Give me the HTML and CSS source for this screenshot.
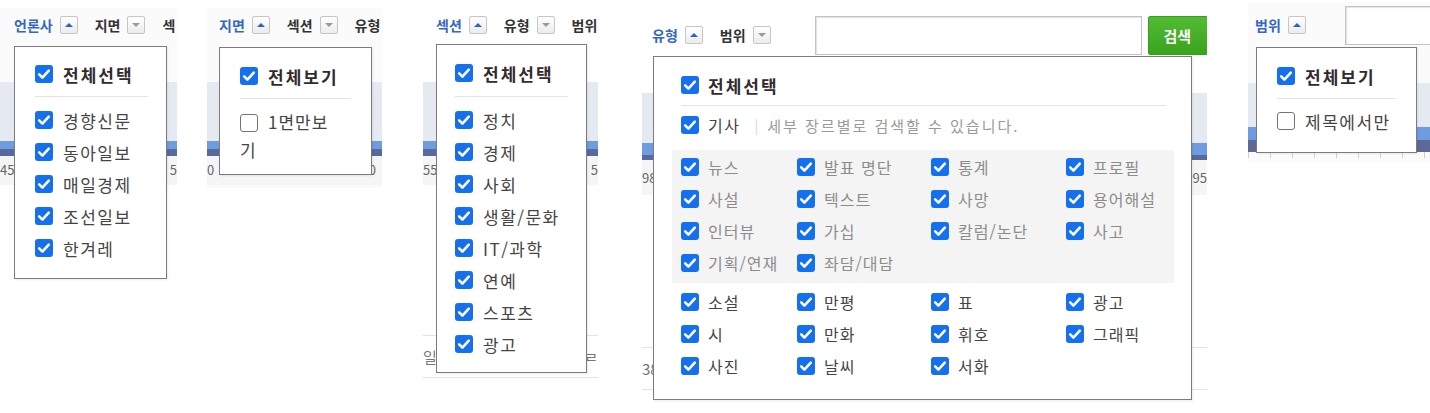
FILE: index.html
```html
<!DOCTYPE html>
<html lang="ko">
<head>
    <meta charset="UTF-8">
    <meta name="viewport" content="width=device-width, initial-scale=1.0">
    <title>검색 필터</title>
    <link rel="stylesheet" href="styles.css">
</head>
<body>
<div class="strip">

    <!-- 언론사 -->
    <section class="shot shot-press">
        <div class="tabs">
            <span class="tab on">언론사</span><span class="toggle up"></span>
            <span class="tab">지면</span><span class="toggle"></span>
            <span class="tab">섹</span>
        </div>
        <div class="chart">
            <div class="band"></div>
            <div class="bar"></div>
            <div class="base"></div>
            <div class="axis"><span>45</span><span>5</span></div>
        </div>
        <div class="menu menu-press">
            <label class="opt head"><span class="cb on"></span>전체선택</label>
            <hr>
            <label class="opt"><span class="cb on"></span>경향신문</label>
            <label class="opt"><span class="cb on"></span>동아일보</label>
            <label class="opt"><span class="cb on"></span>매일경제</label>
            <label class="opt"><span class="cb on"></span>조선일보</label>
            <label class="opt"><span class="cb on"></span>한겨레</label>
        </div>
    </section>

    <!-- 지면 -->
    <section class="shot shot-page">
        <div class="tabs">
            <span class="tab on">지면</span><span class="toggle up"></span>
            <span class="tab">섹션</span><span class="toggle"></span>
            <span class="tab">유형</span>
        </div>
        <div class="chart">
            <div class="band"></div>
            <div class="bar"></div>
            <div class="base"></div>
            <div class="axis"><span>0</span><span>1000</span><span>1000</span></div>
        </div>
        <div class="menu menu-page">
            <label class="opt head"><span class="cb on"></span>전체보기</label>
            <hr>
            <label class="opt wrap"><span class="cb off"></span>1면만보<br>기</label>
        </div>
    </section>

    <!-- 섹션 -->
    <section class="shot shot-section">
        <div class="tabs">
            <span class="tab on">섹션</span><span class="toggle up"></span>
            <span class="tab">유형</span><span class="toggle"></span>
            <span class="tab">범위</span>
        </div>
        <div class="chart">
            <div class="band"></div>
            <div class="bar"></div>
            <div class="base"></div>
            <div class="axis"><span>55</span><span>5</span></div>
        </div>
        <div class="list-rows">
            <div class="list-row"><span>일</span><span>여ㄹ</span></div>
        </div>
        <div class="menu menu-section">
            <label class="opt head"><span class="cb on"></span>전체선택</label>
            <hr>
            <label class="opt"><span class="cb on"></span>정치</label>
            <label class="opt"><span class="cb on"></span>경제</label>
            <label class="opt"><span class="cb on"></span>사회</label>
            <label class="opt"><span class="cb on"></span>생활/문화</label>
            <label class="opt"><span class="cb on"></span>IT/과학</label>
            <label class="opt"><span class="cb on"></span>연예</label>
            <label class="opt"><span class="cb on"></span>스포츠</label>
            <label class="opt"><span class="cb on"></span>광고</label>
        </div>
    </section>

    <!-- 유형 -->
    <section class="shot shot-type">
        <div class="tabs tabs-tall">
            <span class="tab on">유형</span><span class="toggle up"></span>
            <span class="tab">범위</span><span class="toggle"></span>
            <input class="query" type="text">
            <button class="search">검색</button>
        </div>
        <div class="chart">
            <div class="band"></div>
            <div class="bar"></div>
            <div class="base"></div>
            <div class="axis"><span>98</span><span>995</span></div>
        </div>
        <div class="list-rows">
            <div class="list-row"><span>38</span><span></span></div>
        </div>
        <div class="menu menu-type">
            <label class="opt head"><span class="cb on"></span>전체선택</label>
            <hr>
            <div class="article">
                <label class="opt"><span class="cb on"></span>기사</label>
                <span class="pipe">|</span>
                <span class="hint">세부 장르별로 검색할 수 있습니다.</span>
            </div>
            <div class="genres sub">
                <label class="opt"><span class="cb on"></span>뉴스</label>
                <label class="opt"><span class="cb on"></span>발표 명단</label>
                <label class="opt"><span class="cb on"></span>통계</label>
                <label class="opt"><span class="cb on"></span>프로필</label>
                <label class="opt"><span class="cb on"></span>사설</label>
                <label class="opt"><span class="cb on"></span>텍스트</label>
                <label class="opt"><span class="cb on"></span>사망</label>
                <label class="opt"><span class="cb on"></span>용어해설</label>
                <label class="opt"><span class="cb on"></span>인터뷰</label>
                <label class="opt"><span class="cb on"></span>가십</label>
                <label class="opt"><span class="cb on"></span>칼럼/논단</label>
                <label class="opt"><span class="cb on"></span>사고</label>
                <label class="opt"><span class="cb on"></span>기획/연재</label>
                <label class="opt"><span class="cb on"></span>좌담/대담</label>
            </div>
            <div class="genres">
                <label class="opt"><span class="cb on"></span>소설</label>
                <label class="opt"><span class="cb on"></span>만평</label>
                <label class="opt"><span class="cb on"></span>표</label>
                <label class="opt"><span class="cb on"></span>광고</label>
                <label class="opt"><span class="cb on"></span>시</label>
                <label class="opt"><span class="cb on"></span>만화</label>
                <label class="opt"><span class="cb on"></span>휘호</label>
                <label class="opt"><span class="cb on"></span>그래픽</label>
                <label class="opt"><span class="cb on"></span>사진</label>
                <label class="opt"><span class="cb on"></span>날씨</label>
                <label class="opt"><span class="cb on"></span>서화</label>
            </div>
        </div>
    </section>

    <!-- 범위 -->
    <section class="shot shot-range">
        <div class="tabs">
            <span class="tab on">범위</span><span class="toggle up"></span>
            <input class="query" type="text">
        </div>
        <div class="chart">
            <div class="band"></div>
            <div class="bar"></div>
            <div class="base"></div>
            <div class="ticks"></div>
        </div>
        <div class="menu menu-range">
            <label class="opt head"><span class="cb on"></span>전체보기</label>
            <hr>
            <label class="opt"><span class="cb off"></span>제목에서만</label>
        </div>
    </section>

</div>
</body>
</html>
```

FILE: styles.css
```css
body {
    margin: 0;
    background: #fff;
    font-family: "Noto Sans CJK KR", "Noto Sans", sans-serif;
}
.strip {
    display: flex;
    align-items: flex-start;
}
.shot {
    position: relative;
    flex: none;
    background: #fbfbfb;
    margin-top: 8px;
}
.shot-press { width: 177px; height: 177px; }
.shot-page { width: 175px; height: 180px; margin-left: 30px; }
.shot-section { width: 175px; height: 372px; margin-left: 41px; background: #fff; }
.shot-type { width: 565px; height: 405px; margin-left: 44px; background: #fff; }
.shot-range { width: 182px; height: 160px; margin-left: 41px; margin-top: 2px; }

/* header tabs */
.tabs {
    display: flex;
    align-items: center;
    height: 34px;
    font-size: 14px;
    font-weight: bold;
    color: #333;
    white-space: nowrap;
    overflow: hidden;
}
.shot-press .tabs { padding-left: 14px; }
.shot-page .tabs { padding-left: 12px; }
.shot-section .tabs { padding-left: 13px; }
.shot-type .tabs { padding-left: 10px; height: 54px; }
.shot-range .tabs { padding-left: 7px; height: 46px; }
.tab.on {
    color: #3567c4;
}
.toggle {
    flex: none;
    width: 16px;
    height: 16px;
    margin: 0 17px 0 7px;
    border: 1px solid #c6c6c6;
    border-radius: 2px;
    background: linear-gradient(#fff, #ececec);
    display: flex;
    align-items: center;
    justify-content: center;
}
.toggle::before {
    content: "";
    border-left: 4px solid transparent;
    border-right: 4px solid transparent;
    border-top: 4px solid #9a9a9a;
}
.toggle.up::before {
    border-top: 0;
    border-bottom: 4px solid #2d62c2;
}
.query {
    flex: none;
    box-sizing: border-box;
    height: 39px;
    border: 1px solid #c3c3c3;
    box-shadow: inset 1px 1px 1px #e2e2e2;
    background: #fff;
    padding: 0;
}
.shot-type .query { width: 327px; margin-left: 27px; }
.shot-range .query { width: 120px; margin-left: 22px; }
.search {
    flex: none;
    width: 60px;
    height: 39px;
    margin-left: 6px;
    border: 1px solid #38a01c;
    border-radius: 2px;
    background: linear-gradient(#52bc34, #3aa31f);
    color: #fff;
    font-family: inherit;
    font-size: 15px;
    font-weight: bold;
    text-align: left;
    padding-left: 15px;
}

/* chart behind the menus */
.chart { margin-top: 40px; }
.band { height: 59px; background: #e5e9f1; }
.bar { height: 8px; background: #6f9be0; }
.base { height: 7px; background: #57699d; }
.axis {
    display: flex;
    justify-content: space-between;
    height: 29px;
    line-height: 28px;
    font-size: 13px;
    color: #666;
    background: #f5f5f5;
}
.shot-page .axis span:nth-child(2) { margin-left: 40px; }
.shot-page .axis { padding-right: 6px; }

.shot-type .chart { margin-top: 31px; }
.shot-type .band { height: 50px; }
.shot-type .bar { height: 12px; }
.shot-type .base { height: 5px; }
.shot-type .axis { height: 35px; line-height: 36px; }

.shot-range .chart { margin-top: 35px; }
.shot-range .band { height: 44px; }
.shot-range .bar { height: 13px; }
.shot-range .base { height: 12px; background: #5d6a98; }
.ticks {
    height: 6px;
    background: repeating-linear-gradient(90deg, #d0d0d0 0 1px, transparent 1px 22px);
}

.list-rows {
    margin-top: 150px;
    border-top: 1px solid #e3e3e3;
}
.list-row {
    display: flex;
    justify-content: space-between;
    height: 41px;
    line-height: 41px;
    font-size: 15px;
    color: #777;
    border-bottom: 1px solid #e3e3e3;
}
.shot-type .list-rows { margin-top: 152px; }

/* dropdown menus */
.menu {
    position: absolute;
    box-sizing: border-box;
    background: #fff;
    border: 1px solid #7c7c7c;
    box-shadow: 1px 1px 2px rgba(0, 0, 0, 0.08);
}
.menu hr {
    border: 0;
    border-top: 1px solid #e4e4e4;
    margin: 6px 0 7px;
}
.menu-press { left: 14px; top: 38px; width: 153px; height: 233px; padding: 11px 18px 0 20px; }
.menu-page { left: 12px; top: 39px; width: 153px; height: 128px; padding: 12px 20px 0 20px; }
.menu-page hr { margin: 6px 0 9px; }
.menu-section { left: 13px; top: 36px; width: 151px; height: 329px; padding: 12px 18px 0 18px; }
.menu-section hr { margin: 7px 0 7px; }
.menu-range { left: 8px; top: 45px; width: 161px; height: 106px; padding: 12px 20px 0 20px; }
.menu-range hr { margin: 6px 0 6px; }
.menu-type { left: 11px; top: 48px; width: 539px; height: 344px; padding: 12px 25px 0 27px; }
.menu-type hr { margin: 4px 0 3px; }

.opt {
    display: flex;
    align-items: center;
    height: 32px;
    font-size: 17px;
    letter-spacing: 1.5px;
    color: #454545;
    white-space: nowrap;
}
.opt.head {
    font-weight: bold;
    letter-spacing: 2px;
    color: #33292e;
}
.opt.wrap {
    display: block;
    height: auto;
    line-height: 28px;
    letter-spacing: 1px;
    white-space: normal;
}
.opt.wrap .cb {
    display: inline-block;
    vertical-align: -3px;
}
.cb {
    flex: none;
    box-sizing: border-box;
    width: 18px;
    height: 18px;
    margin-right: 10px;
    border-radius: 3px;
}
.cb.on {
    background: #1470ef url("data:image/svg+xml,%3Csvg xmlns='http://www.w3.org/2000/svg' viewBox='0 0 18 18'%3E%3Cpath d='M4.2 9.4l3.2 3.2 6.4-7' fill='none' stroke='%23fff' stroke-width='2.6' stroke-linecap='round' stroke-linejoin='round'/%3E%3C/svg%3E") center / 18px no-repeat;
}
.cb.off {
    border: 1.5px solid #747474;
    background: #fff;
}

/* 유형 menu */
.menu-type .opt {
    font-size: 16px;
    letter-spacing: 1px;
}
.menu-type .opt.head {
    font-size: 17px;
    letter-spacing: 2px;
}
.menu-type .cb { margin-right: 9px; }
.article {
    display: flex;
    align-items: center;
    height: 32px;
}
.article .opt { letter-spacing: 1.5px; }
.pipe {
    margin: 0 9px 0 14px;
    color: #d8d8d8;
    font-size: 14px;
}
.hint {
    font-size: 15px;
    letter-spacing: 2px;
    color: #9a9a9a;
    white-space: nowrap;
}
.genres {
    display: grid;
    grid-template-columns: 116px 134px 135px 1fr;
}
.genres.sub {
    margin: 9px -8px 3px -9px;
    padding: 1px 0 4px 9px;
    background: #f4f4f4;
}
.genres.sub .opt { color: #8c8c8c; }
```
